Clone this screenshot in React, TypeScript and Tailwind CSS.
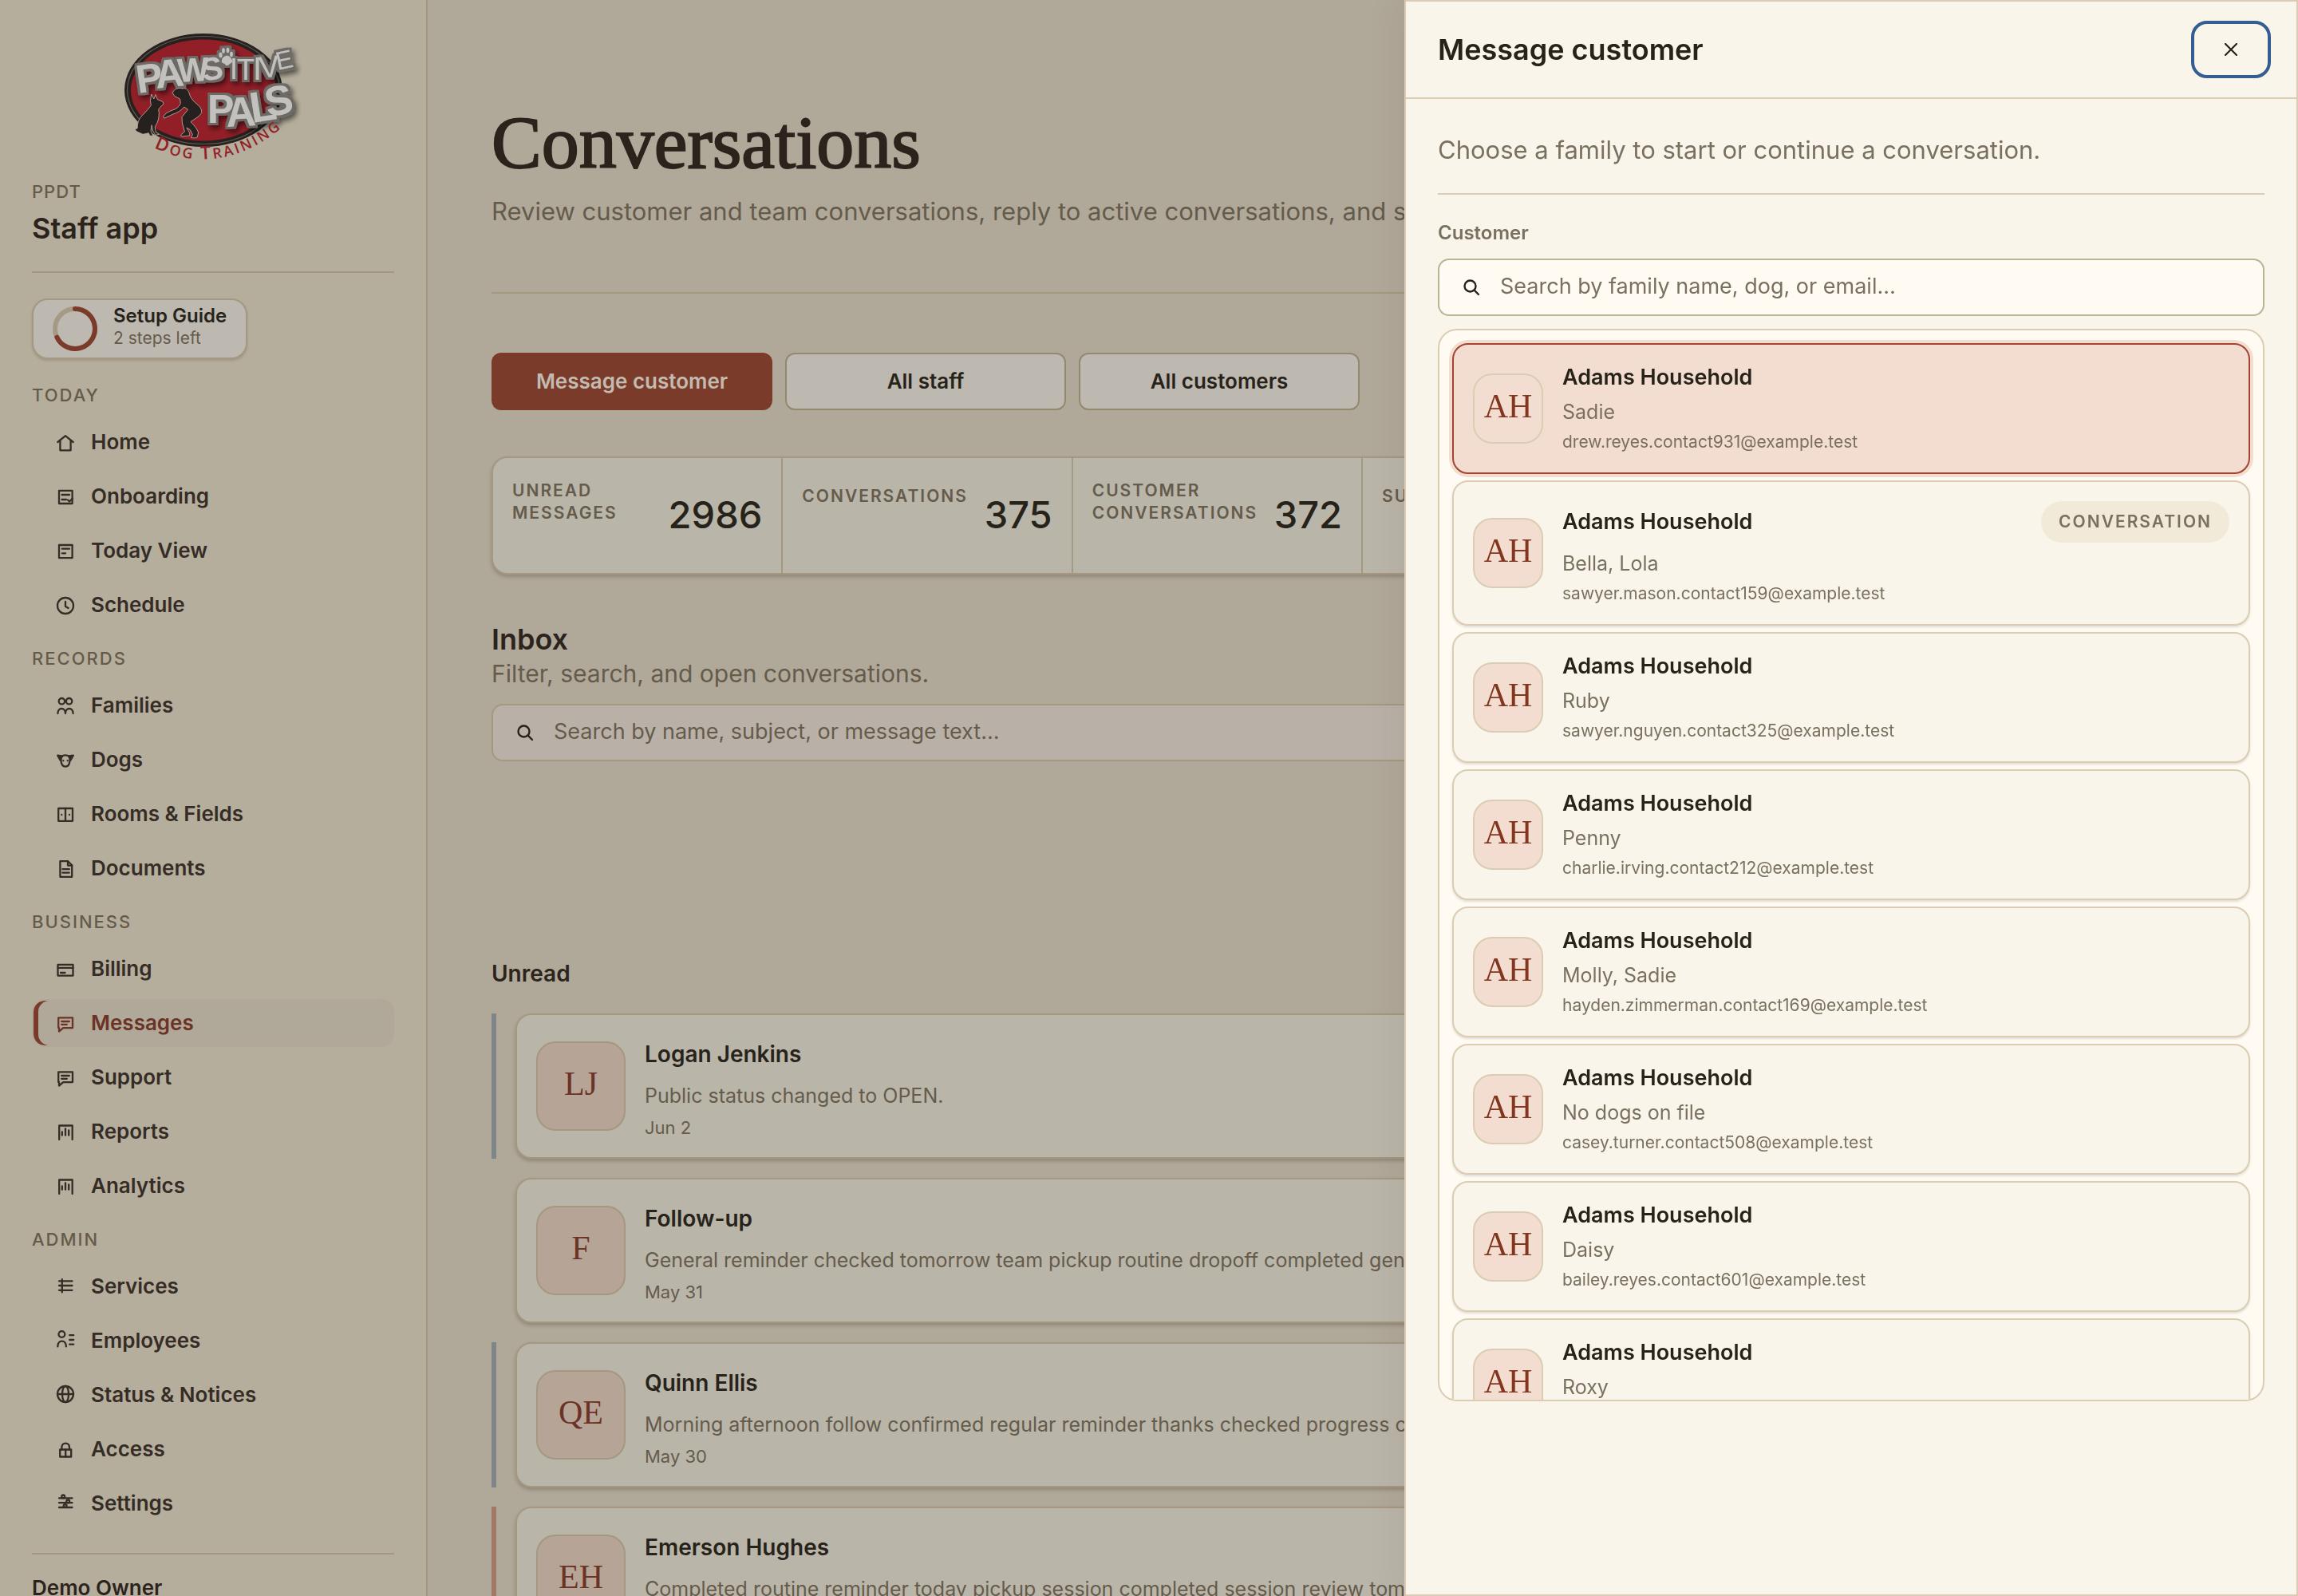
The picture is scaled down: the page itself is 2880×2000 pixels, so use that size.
import type { ReactNode } from "react";

type NavItem = { label: string; icon: ReactNode; active?: boolean };

const homeIcon = <path d="M6.3 16 16 8.2 25.7 16M9.4 14v12.3h13.2V14" />;
const onboardingIcon = (
  <>
    <rect x="8" y="8.8" width="16.6" height="16.2" />
    <path d="M11.5 14h9.5M11.5 20h5.5M19 20.5l2 2 4-4" />
  </>
);
const todayIcon = (
  <>
    <rect x="8" y="9" width="16.6" height="16.2" />
    <path d="M11.8 13.7H21M11.8 19.3H16" />
  </>
);
const clockIcon = (
  <>
    <circle cx="16" cy="17" r="10" />
    <path d="M16 12v6l3.6 2" />
  </>
);
const familiesIcon = (
  <>
    <circle cx="11.4" cy="10.7" r="3.7" />
    <circle cx="20.6" cy="10.7" r="3.7" />
    <path d="M6.4 26c0-8 9.6-8 9.6 0 0-8 9.6-8 9.6 0" />
  </>
);
const dogsIcon = (
  <>
    <path d="M6.2 10.6l5.6.8-2.2 5.2zM25.8 10.6l-5.6.8 2.2 5.2z" fill="currentColor" />
    <path d="M16 10.4c4 0 6 2.6 5.6 6.4-.4 4.6-2.6 7.8-5.6 7.8s-5.2-3.2-5.6-7.8C10 13 12 10.4 16 10.4z" />
    <path d="M13.3 17.2v.1M18.7 17.2v.1" />
  </>
);
const roomsIcon = (
  <>
    <rect x="7.2" y="9" width="17.8" height="15.8" />
    <path d="M16 9v15.8M11.3 17v.1M21 17v.1" />
  </>
);
const documentsIcon = (
  <>
    <path d="M9.4 7.2h9.8l5 5v14.6H9.4z" />
    <path d="M19 7.2v5.4h5.2M12.4 17.2h8.4M12.4 21.6h8.4" />
  </>
);
const billingIcon = (
  <>
    <rect x="6.5" y="10.8" width="19" height="13.8" />
    <path d="M6.5 14.8h19M10 21h5.5" />
  </>
);
const messageIcon = <path d="M7.2 9.3H25v12.8H13.2L8 26.6v-4.5h-.8zM11.2 14h9.6M11.2 17.8h6.6" />;
const chartIcon = <path d="M8.2 26V8.5h16.5V26M11.8 16.5v4.2M16 12.5v8.2M20.2 14.5v6.2" />;
const servicesIcon = <path d="M8 9.3h16.5M8 15h16.5M8 20.8h16.5M11.8 7.2v16.2" />;
const employeesIcon = (
  <>
    <circle cx="11.4" cy="8" r="3.9" />
    <path d="M6.3 23.4c0-9 10.6-9 10.6 0M21.2 9.2h5M21.2 15h5M21.2 20.7h5" />
  </>
);
const globeIcon = (
  <>
    <circle cx="16" cy="15" r="10" />
    <ellipse cx="16" cy="15" rx="4" ry="10" />
    <path d="M6 15h20" />
  </>
);
const lockIcon = (
  <>
    <rect x="9.2" y="16.5" width="14" height="9" />
    <path d="M11.4 16.5v-3c0-6.6 9.6-6.6 9.6 0v3M16.2 16.5v9" />
  </>
);
const settingsIcon = (
  <>
    <path d="M8 9.3h16.5M8 15.2h16.5M8 21h16.5" />
    <circle cx="13.2" cy="7.4" r="1.9" />
    <circle cx="19.2" cy="13.4" r="1.9" />
    <circle cx="15.6" cy="19" r="1.9" />
  </>
);

const navGroups: { title: string; items: NavItem[] }[] = [
  {
    title: "Today",
    items: [
      { label: "Home", icon: homeIcon },
      { label: "Onboarding", icon: onboardingIcon },
      { label: "Today View", icon: todayIcon },
      { label: "Schedule", icon: clockIcon },
    ],
  },
  {
    title: "Records",
    items: [
      { label: "Families", icon: familiesIcon },
      { label: "Dogs", icon: dogsIcon },
      { label: "Rooms & Fields", icon: roomsIcon },
      { label: "Documents", icon: documentsIcon },
    ],
  },
  {
    title: "Business",
    items: [
      { label: "Billing", icon: billingIcon },
      { label: "Messages", icon: messageIcon, active: true },
      { label: "Support", icon: messageIcon },
      { label: "Reports", icon: chartIcon },
      { label: "Analytics", icon: chartIcon },
    ],
  },
  {
    title: "Admin",
    items: [
      { label: "Services", icon: servicesIcon },
      { label: "Employees", icon: employeesIcon },
      { label: "Status & Notices", icon: globeIcon },
      { label: "Access", icon: lockIcon },
      { label: "Settings", icon: settingsIcon },
    ],
  },
];

const stats = [
  { label: "Unread messages", value: "2986" },
  { label: "Conversations", value: "375" },
  { label: "Customer conversations", value: "372" },
  { label: "Support", value: "3" },
  { label: "Team", value: "3" },
  { label: "Archived", value: "0" },
];

const threads = [
  { initials: "LJ", name: "Logan Jenkins", preview: "Public status changed to OPEN.", date: "Jun 2", bar: "bg-[#7f8589]" },
  {
    initials: "F",
    name: "Follow-up",
    preview: "General reminder checked tomorrow team pickup routine dropoff completed general",
    date: "May 31",
    bar: "bg-transparent",
  },
  {
    initials: "QE",
    name: "Quinn Ellis",
    preview: "Morning afternoon follow confirmed regular reminder thanks checked progress care",
    date: "May 30",
    bar: "bg-[#7f8589]",
  },
  {
    initials: "EH",
    name: "Emerson Hughes",
    preview: "Completed routine reminder today pickup session completed session review tomorrow",
    date: "May 29",
    bar: "bg-[#a07867]",
  },
];

const households = [
  { dogs: "Sadie", email: "drew.reyes.contact931@example.test", selected: true },
  { dogs: "Bella, Lola", email: "sawyer.mason.contact159@example.test", conversation: true },
  { dogs: "Ruby", email: "sawyer.nguyen.contact325@example.test" },
  { dogs: "Penny", email: "charlie.irving.contact212@example.test" },
  { dogs: "Molly, Sadie", email: "hayden.zimmerman.contact169@example.test" },
  { dogs: "No dogs on file", email: "casey.turner.contact508@example.test" },
  { dogs: "Daisy", email: "bailey.reyes.contact601@example.test" },
  { dogs: "Roxy", email: "jordan.parker.contact377@example.test" },
];

function NavIcon({ children }: { children: ReactNode }) {
  return (
    <svg
      viewBox="0 0 32 32"
      className="size-8 shrink-0"
      fill="none"
      stroke="currentColor"
      strokeWidth="2.3"
      strokeLinecap="round"
      strokeLinejoin="round"
      aria-hidden="true"
    >
      {children}
    </svg>
  );
}

function SearchIcon() {
  return (
    <svg viewBox="0 0 24 24" className="size-6 shrink-0" fill="none" stroke="currentColor" strokeWidth="2.4" strokeLinecap="round" aria-hidden="true">
      <circle cx="10.5" cy="10.5" r="7" />
      <path d="M15.7 15.7 21 21" />
    </svg>
  );
}

function Logo() {
  return (
    <svg viewBox="0 0 222 168" className="h-[168px] w-[222px]" role="img" aria-label="Pawsitive Pals Dog Training">
      <defs>
        <path id="tagline-arc" d="M37 145Q66 160 102 159.5Q162 157 212 106" />
        {/* One grey outline and soft shadow around the whole lettering */}
        <filter id="lettering" x="-10%" y="-10%" width="130%" height="130%">
          <feMorphology in="SourceAlpha" operator="dilate" radius="3" result="fat" />
          <feGaussianBlur in="fat" stdDeviation="0.6" result="soft" />
          <feFlood floodColor="#6d6a66" />
          <feComposite in2="soft" operator="in" result="outline" />
          <feDropShadow in="outline" dx="3" dy="4" stdDeviation="3" floodColor="#000" floodOpacity="0.55" result="base" />
          <feMerge>
            <feMergeNode in="base" />
            <feMergeNode in="SourceGraphic" />
          </feMerge>
        </filter>
      </defs>
      <ellipse cx="99" cy="73" rx="99" ry="71" fill="#26211e" />
      <ellipse cx="99" cy="73" rx="95.5" ry="67.5" fill="none" stroke="#5d5853" strokeWidth="1.2" />
      <ellipse cx="99" cy="73" rx="91" ry="63.5" fill="#921f28" />
      <g
        filter="url(#lettering)"
        fontFamily="'Liberation Sans Narrow', 'Liberation Sans', sans-serif"
        fontWeight="700"
        fill="#c3c1bd"
      >
        <text x="17" y="77" fontSize="50" transform="rotate(-8 17 77)">P</text>
        <text x="40" y="71" fontSize="50" transform="rotate(-6 40 71)">A</text>
        <text x="67" y="63" fontSize="42" transform="rotate(-3 67 63)">W</text>
        <text x="99" y="62" fontSize="40" transform="rotate(-10 99 62)">S</text>
        <g fontWeight="400">
          <text x="132" y="59" fontSize="36">I</text>
          <text x="141" y="60" fontSize="36">T</text>
          <text x="161" y="60" fontSize="40">I</text>
          <text x="170" y="58" fontSize="38" transform="rotate(-6 170 58)">V</text>
          <text x="192" y="48" fontSize="32" transform="rotate(-12 192 48)">E</text>
        </g>
        <text x="104" y="114" fontSize="50">P</text>
        <text x="128" y="119" fontSize="52" transform="rotate(-3 128 119)">A</text>
        <text x="160" y="114" fontSize="54" transform="rotate(-9 160 114)">L</text>
        <text x="180" y="107" fontSize="52" transform="rotate(-12 180 107)">S</text>
        <path d="M127 30c3-1 7 2 8 6 1 3-3 3-4 5-2 2-5 1-5-1-2-1-5-1-4-4 0-3 2-5 5-6z" />
        <ellipse cx="120.5" cy="29" rx="2" ry="3.3" />
        <ellipse cx="124" cy="23.5" rx="1.8" ry="3.3" />
        <ellipse cx="129.5" cy="23" rx="1.8" ry="3.3" />
        <ellipse cx="134" cy="28" rx="1.8" ry="3.3" />
      </g>
      <g transform="translate(-156 -40) scale(0.3444 0.3333)" fill="#26211e" stroke="#b9a9a0" strokeWidth="2.6" strokeLinejoin="round">
        <path d="M551 354L560 372L566 356L573 374L592 382L595 391L582 404L577 412C581 430 578 445 572 462L564 478L567 497L579 505L566 508L556 492L552 470L549 492L557 511L545 510L541 500L520 505L497 494L491 486L500 482C500 460 506 445 518 434C530 420 545 405 550 395L547 380Z" />
        <path d="M628 350C632 334 650 328 664 333C678 328 686 340 689 352C694 372 706 382 722 396C734 408 736 420 731 428C722 442 706 448 694 458C704 470 716 480 722 498L718 516C710 520 702 519 695 517L701 506L692 488L679 480L690 500L690 510L660 513L658 507L672 495L663 462L662 440L684 412L670 402C660 416 645 424 628 430L597 445L594 438L604 426L618 418L638 410C648 404 655 396 657 388L655 372L636 362Z" />
      </g>
      <text fontFamily="'Open Sans', 'Noto Sans', sans-serif" fontWeight="600" fontSize="18" letterSpacing="3" fill="#921f28">
        <textPath href="#tagline-arc">
          <tspan fontSize="23">D</tspan>OG <tspan fontSize="23">T</tspan>RAINING
        </textPath>
      </text>
    </svg>
  );
}

function Sidebar() {
  return (
    <aside className="flex w-[536px] shrink-0 flex-col overflow-hidden border-r-2 border-[#a49881] bg-[#b5ae9d] px-10 pt-10">
      <div className="flex justify-center">
        <Logo />
      </div>
      <div className="mt-[18px] text-[22px] leading-7 font-medium tracking-[1px] text-[#655b4b]">PPDT</div>
      <div className="mt-2.5 border-b-2 border-[#a49881] pb-8 text-[36px] leading-11 font-semibold text-[#2b231c]">Staff app</div>
      <button
        type="button"
        className="mt-8 flex h-[76px] shrink-0 items-center gap-5 self-start rounded-[20px] border-2 border-[#a49881] bg-[#bdb8b0] pr-6 pl-6 text-left shadow-[0_2px_3px_rgba(60,45,25,0.18)]"
      >
        <svg viewBox="0 0 56 56" className="size-14" fill="none" strokeWidth="6" strokeLinecap="round" aria-hidden="true">
          <circle cx="28" cy="28" r="25" stroke="#a59a84" />
          <path d="M28 3a25 25 0 1 1-22.6 35.7" stroke="#7a3b2a" />
        </svg>
        <span className="flex flex-col pb-1">
          <span className="text-[24px] leading-7 font-semibold text-[#27231a]">Setup Guide</span>
          <span className="text-[21px] leading-7 text-[#655b4b]">2 steps left</span>
        </span>
      </button>
      <nav aria-label="Main" className="mt-2">
        {navGroups.map((group) => (
          <section key={group.title} className="pt-[23px]">
            <h2 className="mb-[15px] text-[22px] leading-7 font-medium tracking-[2px] text-[#655b4b] uppercase">{group.title}</h2>
            <ul className="flex flex-col gap-2">
              {group.items.map((item) => (
                <li key={item.label}>
                  <a
                    href={`#${item.label}`}
                    aria-current={item.active ? "page" : undefined}
                    className={
                      "flex h-[60px] items-center gap-4 rounded-2xl border-2 px-6 text-[26px] leading-8 font-semibold " +
                      (item.active
                        ? "border-[#b1a899] bg-[#b0a899] text-[#6b3325] shadow-[inset_6px_0_0_#7a3b2a]"
                        : "border-transparent text-[#352c25]")
                    }
                  >
                    <NavIcon>{item.icon}</NavIcon>
                    {item.label}
                  </a>
                </li>
              ))}
            </ul>
          </section>
        ))}
      </nav>
      <div className="mt-8 border-t-2 border-[#a49881] pt-6 text-[26px] leading-9 font-semibold text-[#2b231c]">Demo Owner</div>
    </aside>
  );
}

function Initials({ children, small, plain }: { children: string; small?: boolean; plain?: boolean }) {
  return (
    <span
      className={
        "flex shrink-0 items-center justify-center rounded-3xl border-2 pb-1.5 font-[Liberation_Serif,serif] text-[42px] leading-none " +
        (small ? "size-[88px] border-[#dacdb3] text-[#82361f] " : "size-28 border-[#a49881] bg-[#b6a497] text-[#6b3325] ") +
        (small && !plain ? "bg-[#f3ddd0]" : "")
      }
      aria-hidden="true"
    >
      {children}
    </span>
  );
}

function Conversations() {
  return (
    <main className="min-w-0 flex-1 overflow-hidden px-20 pt-[126px]">
      <h1 className="font-[Liberation_Serif,serif] text-[94px] leading-[104px] font-medium text-[#2b231c] [-webkit-text-stroke:2px_#2b231c]">
        Conversations
      </h1>
      <p className="mt-[13px] text-[31px] leading-[44px] whitespace-nowrap text-[#655b4b]">
        Review customer and team conversations, reply to active conversations, and send announcements.
      </p>
      <div className="mt-[79px] border-t-2 border-[#a49881]" />
      <div className="mt-[74px] flex gap-4 text-[26px] leading-9 font-semibold">
        <button type="button" className="h-[72px] w-[352px] rounded-xl bg-[#7a3b2a] text-[#c3bbb0]">Message customer</button>
        <button type="button" className="h-[72px] w-[352px] rounded-xl border-2 border-[#938870] bg-[#bdb8b0] text-[#27231a]">All staff</button>
        <button type="button" className="h-[72px] w-[352px] rounded-xl border-2 border-[#938870] bg-[#bdb8b0] text-[#27231a]">All customers</button>
      </div>
      <dl className="mt-[58px] grid grid-cols-6 overflow-hidden rounded-[20px] border-2 border-[#a49881] bg-[#bab5a9] shadow-[0_3px_4px_rgba(60,45,25,0.25)]">
        {stats.map((stat) => (
          <div key={stat.label} className="flex h-36 justify-between gap-4 border-r-2 border-[#a49881] px-6 pt-[27px] last:border-r-0">
            <dt className="flex min-h-[42px] items-center self-start text-[21px] leading-7 font-semibold tracking-[2px] text-[#655b4b] uppercase">
              {stat.label}
            </dt>
            <dd className="pt-3 text-[47px] leading-[64px] font-medium text-[#27231a]">{stat.value}</dd>
          </div>
        ))}
      </dl>
      <h2 className="mt-[60px] text-[36px] leading-[42px] font-semibold text-[#2b231c]">Inbox</h2>
      <p className="text-[30px] leading-[44px] text-[#655b4b]">Filter, search, and open conversations.</p>
      <label className="mt-4 flex h-[72px] items-center gap-6 rounded-[14px] border-2 border-[#a49881] bg-[#b9b1a7] px-7 text-[#27231a]">
        <SearchIcon />
        <input
          type="search"
          aria-label="Search conversations"
          placeholder="Search by name, subject, or message text…"
          className="min-w-0 flex-1 bg-transparent pb-0.5 text-[27px] placeholder:text-[#655b4b] focus:outline-none"
        />
      </label>
      <h3 className="mt-[246px] text-[28px] leading-10 font-semibold text-[#2b231c]">Unread</h3>
      <ul className="mt-[30px] flex flex-col gap-6">
        {threads.map((thread) => (
          <li key={thread.name} className="flex h-[182px] shrink-0 gap-6">
            <span className={"w-1.5 shrink-0 " + thread.bar} />
            <a
              href={`#${thread.name}`}
              className="flex min-w-0 flex-1 items-center gap-6 rounded-[20px] border-2 border-[#a49881] bg-[#bab5a9] px-6 shadow-[0_3px_4px_rgba(60,45,25,0.25)]"
            >
              <Initials>{thread.initials}</Initials>
              <span className="flex min-w-0 flex-col pt-2">
                <span className="text-[28px] leading-10 font-semibold text-[#27231a]">{thread.name}</span>
                <span className="mt-3 text-[25px] leading-10 whitespace-nowrap text-[#655b4b]">{thread.preview}</span>
                <span className="mt-1 text-[22px] leading-8 text-[#655b4b]">{thread.date}</span>
              </span>
            </a>
          </li>
        ))}
      </ul>
    </main>
  );
}

function CustomerDrawer() {
  return (
    <div
      role="dialog"
      aria-modal="true"
      aria-labelledby="drawer-title"
      className="fixed inset-y-0 right-0 flex w-[1120px] max-w-full flex-col border-2 border-[#dacdb3] bg-[#faf5ea] shadow-[0_0_48px_rgba(50,35,20,0.09)]"
    >
      <header className="flex items-center justify-between border-b-2 border-[#dacdb3] py-6 pr-8 pl-10">
        <h2 id="drawer-title" className="text-[36px] leading-[44px] font-semibold text-[#27231a]">Message customer</h2>
        <button
          type="button"
          aria-label="Close"
          className="flex h-[72px] w-[100px] items-center justify-center rounded-[20px] border-4 border-[#345d91] text-[#27231a]"
        >
          <svg viewBox="0 0 16 16" className="size-4" stroke="currentColor" strokeWidth="2.2" strokeLinecap="round" aria-hidden="true">
            <path d="M1 1l14 14M15 1L1 15" />
          </svg>
        </button>
      </header>
      <div className="flex min-h-0 flex-1 flex-col px-10 pt-10">
        <p className="border-b-2 border-[#dacdb3] pb-[30px] text-[31px] leading-[48px] text-[#7a705f]">
          Choose a family to start or continue a conversation.
        </p>
        <label htmlFor="customer-search" className="mt-8 text-[24px] leading-8 font-semibold text-[#7a705f]">Customer</label>
        <div className="mt-4 flex h-[72px] shrink-0 items-center gap-6 rounded-[14px] border-2 border-[#bdb298] bg-[#fffbf3] px-7 text-[#27231a]">
          <SearchIcon />
          <input
            id="customer-search"
            type="search"
            placeholder="Search by family name, dog, or email…"
            className="min-w-0 flex-1 bg-transparent pb-0.5 text-[27px] placeholder:text-[#7a705f] focus:outline-none"
          />
        </div>
        <ul className="mt-4 flex max-h-[84rem] flex-col gap-2 overflow-hidden rounded-3xl border-2 border-[#dacdb3] bg-[#fffbf3] p-4">
          {households.map((household) => (
            <li key={household.email}>
              <button
                type="button"
                className={
                  "flex w-full items-center gap-6 rounded-[20px] border-2 p-6 text-left " +
                  (household.selected
                    ? "border-[#a1452f] bg-[#f3ddd0] shadow-[0_0_0_4px_#f3ddd0]"
                    : "border-[#dacdb3] bg-[#faf5ea] shadow-[0_2px_3px_rgba(60,45,25,0.14)]")
                }
              >
                <Initials small plain={household.selected}>AH</Initials>
                <span className="flex min-w-0 flex-1 flex-col">
                  <span className="flex items-center justify-between">
                    <span className="text-[27px] leading-[34px] font-semibold text-[#27231a]">Adams Household</span>
                    {household.conversation && (
                      <span className="rounded-full bg-[#f2ead9] px-[22px] py-3 text-[21px] leading-7 font-semibold tracking-[2px] text-[#7a705f] uppercase">
                        Conversation
                      </span>
                    )}
                  </span>
                  <span className="mt-2 text-[25px] leading-9 text-[#7a705f]">{household.dogs}</span>
                  <span className="mt-1.5 text-[21px] leading-7 text-[#7a705f]">{household.email}</span>
                </span>
              </button>
            </li>
          ))}
        </ul>
      </div>
    </div>
  );
}

export default function App() {
  return (
    <div className="flex h-screen overflow-hidden bg-[#b0a899] font-[Inter,sans-serif]">
      <Sidebar />
      <Conversations />
      <CustomerDrawer />
    </div>
  );
}
